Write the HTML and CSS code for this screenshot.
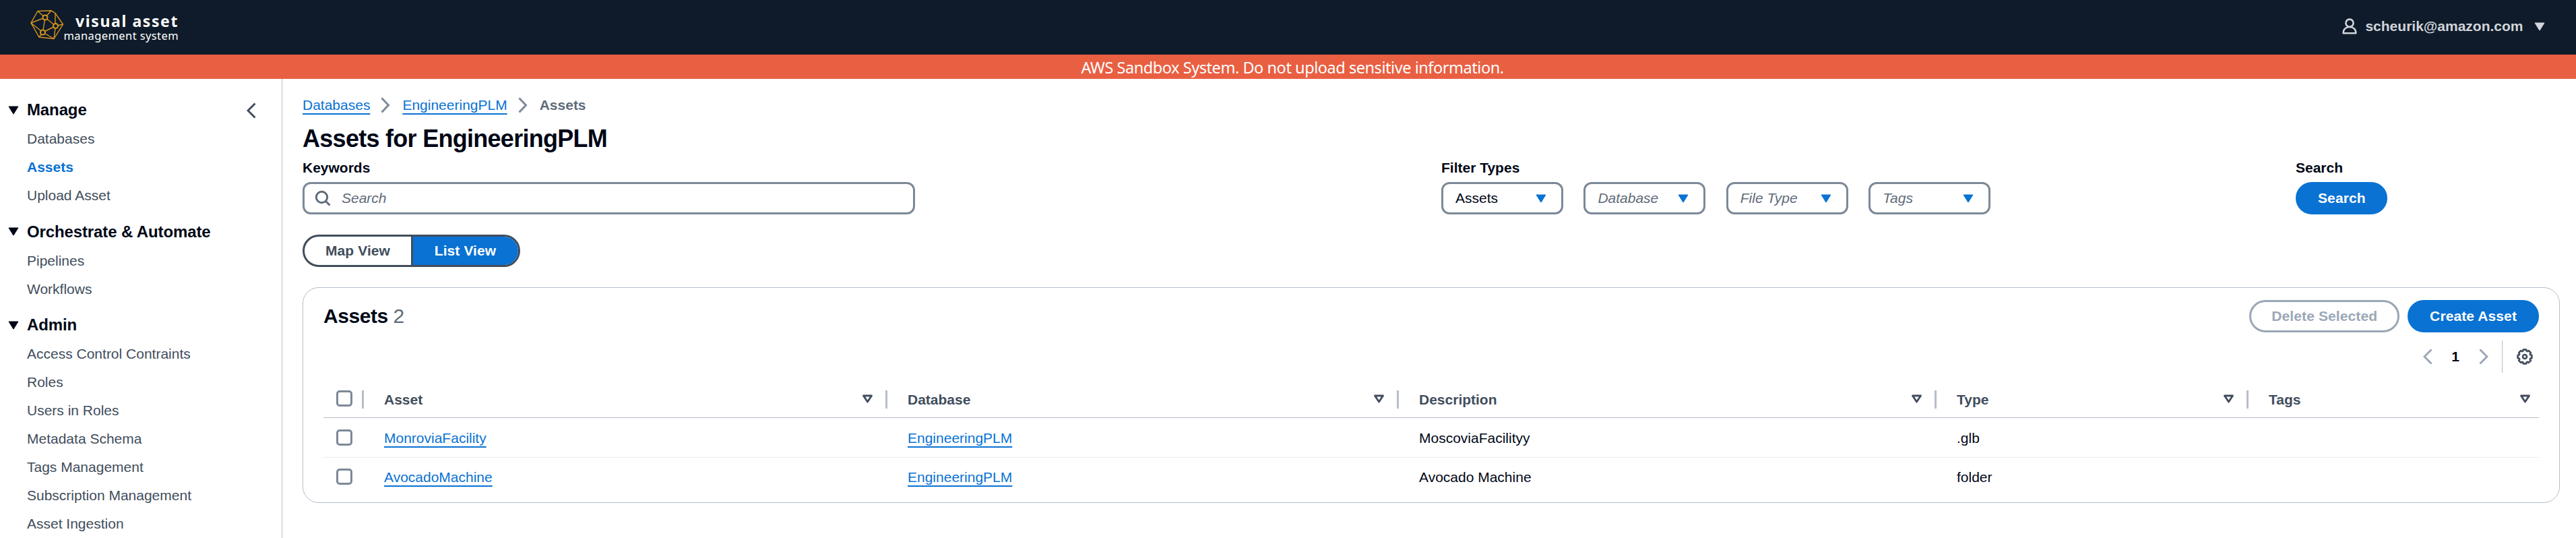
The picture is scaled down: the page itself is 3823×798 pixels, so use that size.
FILE: index.html
```html
<!DOCTYPE html>
<html lang="en">
<head>
<meta charset="utf-8">
<title>Visual Asset Management System</title>
<link rel="stylesheet" href="styles.css">
</head>
<body>
<header class="topbar">
  <div class="logo">
    <svg class="logo-mark" width="50" height="46" viewBox="0 0 50 46" fill="none" stroke="#d8951d" stroke-width="1.4">
      <path d="M11 2.500 31 1.800 37 5.500 48.500 22 35 43.500 13 41 1 20Z"/>
      <path d="M11 2.500 22 12M31 1.800 22 12M1 20 22 12M22 12 37.500 24.500M22 12 18.500 34M1 20 18.500 34M37.500 24.500 18.500 34M37 5.500V24.500M48.500 22 37.500 24.500M37.500 24.500 35 43.500M18.500 34 35 43.500M18.500 34 13 41"/>
      <g fill="#0f1b2a" stroke-width="2"><circle cx="22" cy="12" r="3.500"/><circle cx="37.500" cy="24.500" r="3.500"/><circle cx="18.500" cy="34" r="3.500"/></g>
    </svg>
    <div class="logo-text"><span class="logo-title">visual asset</span><span class="logo-sub">management system</span></div>
  </div>
  <div class="user">
    <svg width="22" height="24" viewBox="0 0 22 24" fill="none" stroke="#d1d5db" stroke-width="2.600"><circle cx="11" cy="7.200" r="5.600"/><path d="M1.700 22.200C1.700 16.500 5.500 13 11 13S20.300 16.500 20.300 22.200Z" stroke-linejoin="round"/></svg>
    <span class="user-name">scheurik@amazon.com</span>
    <svg class="caret" width="16" height="13" viewBox="0 0 16 13"><path d="M1.500 1.200h13L8 11.500Z" fill="#d1d5db" stroke="#d1d5db" stroke-width="1.500" stroke-linejoin="round"/></svg>
  </div>
</header>
<div class="banner"><span>AWS Sandbox System. Do not upload sensitive information.</span></div>
<div class="shell">
  <nav class="sidebar">
    <svg class="collapse" width="14" height="24" viewBox="0 0 14 24" fill="none" stroke="#414d5c" stroke-width="3"><path d="M12.500 1.500 2 12 12.500 22.500"/></svg>
    <section class="group">
      <h2 class="group-title"><svg width="16" height="13" viewBox="0 0 16 13"><path class="tri" d="M1.500 1.200h13L8 11.500Z"/></svg>Manage</h2>
      <a class="nav">Databases</a><a class="nav active">Assets</a><a class="nav">Upload Asset</a>
    </section>
    <section class="group">
      <h2 class="group-title"><svg width="16" height="13" viewBox="0 0 16 13"><path class="tri" d="M1.500 1.200h13L8 11.500Z"/></svg>Orchestrate &amp; Automate</h2>
      <a class="nav">Pipelines</a><a class="nav">Workflows</a>
    </section>
    <section class="group">
      <h2 class="group-title"><svg width="16" height="13" viewBox="0 0 16 13"><path class="tri" d="M1.500 1.200h13L8 11.500Z"/></svg>Admin</h2>
      <a class="nav">Access Control Contraints</a><a class="nav">Roles</a><a class="nav">Users in Roles</a><a class="nav">Metadata Schema</a><a class="nav">Tags Management</a><a class="nav">Subscription Management</a><a class="nav">Asset Ingestion</a>
    </section>
  </nav>
  <main class="content">
    <div class="crumbs">
      <a class="link">Databases</a>
      <svg width="14" height="24" viewBox="0 0 14 24"><path class="crumb-arrow" d="M1.500 1.500 11.500 12 1.500 22.500"/></svg>
      <a class="link">EngineeringPLM</a>
      <svg width="14" height="24" viewBox="0 0 14 24"><path class="crumb-arrow" d="M1.500 1.500 11.500 12 1.500 22.500"/></svg>
      <span class="crumb-current">Assets</span>
    </div>
    <h1 class="title">Assets for EngineeringPLM</h1>
    <div class="filters">
      <div class="field keywords">
        <label class="label">Keywords</label>
        <div class="input"><svg width="24" height="24" viewBox="0 0 24 24" fill="none" stroke="#5f6b7a" stroke-width="3"><circle cx="10.500" cy="10.500" r="8.200"/><path d="m16 16 6.500 6.500"/></svg><span class="placeholder">Search</span></div>
      </div>
      <div class="field types">
        <label class="label">Filter Types</label>
        <div class="selects">
          <div class="select">Assets<svg width="16" height="13" viewBox="0 0 16 13"><path class="tri-blue" d="M1.500 1.200h13L8 11.500Z"/></svg></div>
          <div class="select placeholder">Database<svg width="16" height="13" viewBox="0 0 16 13"><path class="tri-blue" d="M1.500 1.200h13L8 11.500Z"/></svg></div>
          <div class="select placeholder">File Type<svg width="16" height="13" viewBox="0 0 16 13"><path class="tri-blue" d="M1.500 1.200h13L8 11.500Z"/></svg></div>
          <div class="select placeholder">Tags<svg width="16" height="13" viewBox="0 0 16 13"><path class="tri-blue" d="M1.500 1.200h13L8 11.500Z"/></svg></div>
        </div>
      </div>
      <div class="field go">
        <label class="label">Search</label>
        <button class="btn primary search-btn">Search</button>
      </div>
    </div>
    <div class="segmented"><span class="seg map">Map View</span><span class="seg list">List View</span></div>
    <section class="card">
      <div class="card-head">
        <h2 class="card-title">Assets <span class="count">2</span></h2>
        <div class="actions"><button class="btn disabled">Delete Selected</button><button class="btn primary create-btn">Create Asset</button></div>
      </div>
      <div class="pager">
        <svg width="14" height="24" viewBox="0 0 14 24"><path class="page-arrow" d="M12.500 1.500 2 12 12.500 22.500"/></svg>
        <span class="page">1</span>
        <svg width="14" height="24" viewBox="0 0 14 24"><path class="page-arrow" d="M1.500 1.500 12 12 1.500 22.500"/></svg>
        <span class="pager-line"></span>
        <svg class="gear" width="24" height="24" viewBox="0 0 24 24" fill="none" stroke="#414d5c" stroke-width="2.600" stroke-linejoin="round"><path d="M9.800 1.600H14.200L14.600 3.600 16.100 4.200 17.800 3.100 20.900 6.200 19.800 7.900 20.400 9.400 22.400 9.800V14.200L20.400 14.600 19.800 16.100 20.900 17.800 17.800 20.900 16.100 19.800 14.600 20.400 14.200 22.400H9.800L9.400 20.400 7.900 19.800 6.200 20.900 3.100 17.800 4.200 16.100 3.600 14.600 1.600 14.200V9.800L3.600 9.400 4.200 7.900 3.100 6.200 6.200 3.100 7.900 4.200 9.400 3.600Z"/><circle cx="12" cy="12" r="3"/></svg>
      </div>
      <div class="table">
        <div class="row head">
          <div class="cell check"><i class="box"></i></div>
          <div class="cell">Asset<svg width="17" height="14" viewBox="0 0 17 14"><path class="tri-line" d="M2.500 2h12L8.500 11Z"/></svg></div>
          <div class="cell">Database<svg width="17" height="14" viewBox="0 0 17 14"><path class="tri-line" d="M2.500 2h12L8.500 11Z"/></svg></div>
          <div class="cell">Description<svg width="17" height="14" viewBox="0 0 17 14"><path class="tri-line" d="M2.500 2h12L8.500 11Z"/></svg></div>
          <div class="cell">Type<svg width="17" height="14" viewBox="0 0 17 14"><path class="tri-line" d="M2.500 2h12L8.500 11Z"/></svg></div>
          <div class="cell last">Tags<svg width="17" height="14" viewBox="0 0 17 14"><path class="tri-line" d="M2.500 2h12L8.500 11Z"/></svg></div>
        </div>
        <div class="row">
          <div class="cell check"><i class="box"></i></div>
          <div class="cell"><a class="link">MonroviaFacility</a></div>
          <div class="cell"><a class="link">EngineeringPLM</a></div>
          <div class="cell">MoscoviaFacilityy</div>
          <div class="cell">.glb</div>
          <div class="cell"></div>
        </div>
        <div class="row bottom">
          <div class="cell check"><i class="box"></i></div>
          <div class="cell"><a class="link">AvocadoMachine</a></div>
          <div class="cell"><a class="link">EngineeringPLM</a></div>
          <div class="cell">Avocado Machine</div>
          <div class="cell">folder</div>
          <div class="cell"></div>
        </div>
      </div>
    </section>
  </main>
</div>
</body>
</html>
```
FILE: styles.css
```css
* { box-sizing: border-box; }
body { margin: 0; height: 798px; overflow: hidden; background: #fff; color: #000716; font: 21px/30px "Liberation Sans", Arial, sans-serif; }
svg { display: block; flex: none; }
h1, h2 { margin: 0; }

.topbar { height: 81px; background: #0f1b2a; display: flex; justify-content: space-between; padding: 0 46px 0 45px; }
.logo { display: flex; padding-top: 14px; }
.logo-text { display: flex; flex-direction: column; align-items: flex-end; color: #fff; font-family: "Noto Sans", sans-serif; width: 170px; white-space: nowrap; }
.logo-title { font-weight: 700; font-size: 23px; line-height: 30px; letter-spacing: 1.6px; padding-top: 2px; }
.logo-sub { font-size: 16.500px; line-height: 20px; letter-spacing: .4px; margin-top: -3px; }
.user { display: flex; align-items: center; color: #d1d5db; font-weight: 700; padding-bottom: 4px; }
.user-name { margin: 0 16.5px 0 12.5px; }
.user .caret { margin-top: 1px; }

.banner { height: 36px; background: #e95f42; color: #fff; display: flex; align-items: center; justify-content: center; padding: 2px 0 0 13px; font: 23.5px/34px "Noto Sans", sans-serif; letter-spacing: -.45px; }

.shell { display: flex; height: 681px; }
.sidebar { position: relative; width: 419px; border-right: 1px solid #b6bec9; padding: 31px 0 0 40px; flex: none; }
.collapse { position: absolute; left: 366px; top: 35px; }
.group { display: flex; flex-direction: column; gap: 12px; margin-bottom: 23.5px; }
.group-title { display: flex; align-items: center; font-size: 24px; line-height: 30px; letter-spacing: -.12px; margin: 0 0 1px -28px; gap: 12px; }
.tri { fill: #000716; stroke: #000716; stroke-width: 1.5; stroke-linejoin: round; }
.tri-blue { fill: #0972d3; stroke: #0972d3; stroke-width: 1.5; stroke-linejoin: round; }
.tri-line { fill: none; stroke: #414d5c; stroke-width: 2.8; stroke-linejoin: round; }
.nav { color: #414d5c; }
.nav.active { color: #0972d3; font-weight: 700; }

.content { flex: 1; padding: 24px 24px 0 30px; }
.crumbs { display: flex; align-items: center; height: 30px; }
.crumbs svg { margin: 0 18px 0 16px; }
.crumb-arrow { fill: none; stroke: #7d8998; stroke-width: 3; }
.crumb-current { color: #5f6b7a; font-weight: 700; }
.link { color: #0972d3; text-decoration: underline; text-decoration-thickness: 2px; text-underline-offset: 5px; text-decoration-skip-ink: none; }
.title { font-size: 36px; line-height: 45px; letter-spacing: -.72px; margin-top: 12px; }

.filters { display: flex; margin-top: 6px; }
.field { display: flex; flex-direction: column; gap: 6px; }
.label { font-weight: 700; }
.keywords { width: 909px; }
.types { margin-left: 781px; width: 816px; }
.go { margin-left: 452px; }
.input { height: 48px; border: 3px solid #7d8998; border-radius: 12px; display: flex; align-items: center; padding-left: 15px; gap: 16px; }
.placeholder { color: #5f6b7a; font-style: italic; }
.selects { display: flex; gap: 30.4px; }
.select { width: 181px; height: 48px; border: 3px solid #7d8998; border-radius: 12px; display: flex; align-items: center; justify-content: space-between; padding: 0 22px 0 18px; }
.btn { height: 48px; border: 3px solid; border-radius: 30px; font: 700 21px/30px "Liberation Sans", Arial, sans-serif; letter-spacing: .105px; padding: 0 30px; }
.primary { background: #0972d3; border-color: #0972d3; color: #fff; }
.disabled { background: #fff; border-color: #9ba7b6; color: #9ba7b6; }
.search-btn { width: 136px; }

.segmented { display: flex; width: 323px; height: 48px; margin-top: 30px; border: 3px solid #414d5c; border-radius: 24px; overflow: hidden; font-weight: 700; letter-spacing: .1px; }
.seg { display: flex; align-items: center; justify-content: center; }
.map { width: 161px; color: #414d5c; border-right: 3px solid #414d5c; }
.list { flex: 1; background: #0972d3; color: #fff; padding-right: 1px; }

.card { margin-top: 30px; height: 320px; border: 1px solid #b6bec9; border-radius: 24px; padding: 18px 30px 0; }
.card-head { display: flex; justify-content: space-between; align-items: center; }
.card-title { font-size: 30px; line-height: 36px; letter-spacing: -.45px; }
.count { font-weight: 400; color: #5f6b7a; }
.actions { display: flex; gap: 12px; }
.pager { display: flex; justify-content: flex-end; align-items: center; height: 48px; margin-top: 12px; padding-right: 9px; }
.page { font-weight: 700; margin: 0 29px 0 28.5px; }
.page-arrow { fill: none; stroke: #9ba7b6; stroke-width: 3; }
.pager-line { width: 1px; height: 48px; background: #b6bec9; margin: 0 21px 0 20px; }
.row { display: grid; grid-template-columns: 60px 777px 759px 798px 463px 1fr; height: 59px; border-bottom: 1px solid #e9ebed; }
.cell { position: relative; display: flex; align-items: center; padding: 2px 0 0 30px; }
.head { height: 67px; border-color: #b6bec9; font-weight: 700; color: #414d5c; padding-top: 12px; }
.head .cell { justify-content: space-between; padding: 2px 21px 0 30px; }
.head .cell svg { margin-bottom: 2px; }
.head .cell:not(.last)::after { content: ""; position: absolute; right: 0; top: 14px; width: 3px; height: 27px; background: #b6bec9; }
.head .cell.last { padding-right: 12px; }
.cell.check { padding: 0 0 0 19px; }
.head .cell.check { padding: 0 0 2px 19px; }
.box { width: 24px; height: 24px; border: 3px solid #7d8998; border-radius: 5px; }
.bottom { height: 57px; border: 0; }
.bottom .cell { padding-top: 1px; }
.bottom .cell.check { padding: 0 0 1px 19px; }
```
